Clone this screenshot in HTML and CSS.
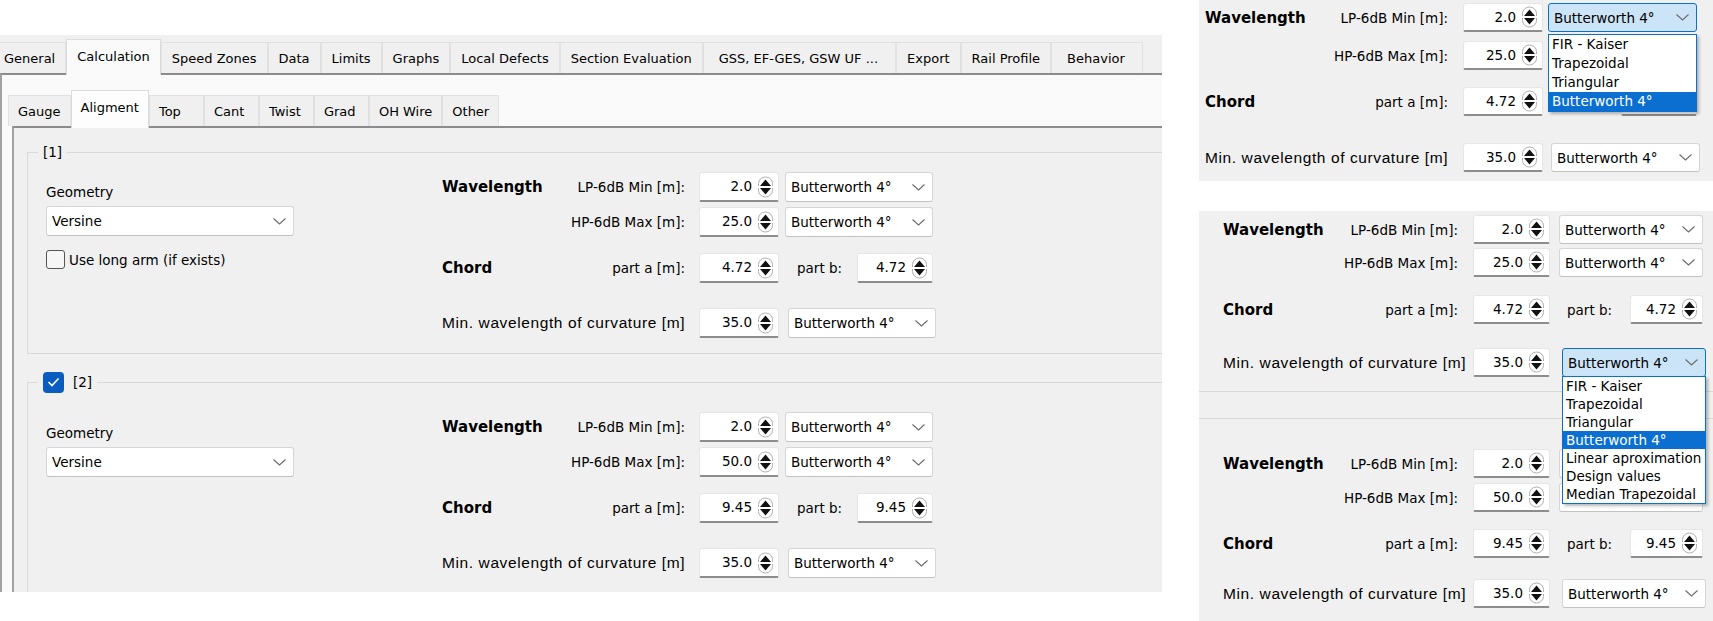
FILE: index.html
```html
<!DOCTYPE html>
<html>
<head>
<meta charset="utf-8">
<title>Calculation – Aligment</title>
<link rel="stylesheet" href="styles.css">
</head>
<body>
<div class="page">

  <section class="shot main">
    <div class="tabbar outer-tabs">
      <div class="tab first">General</div>
      <div class="tab active">Calculation</div>
      <div class="tab">Speed Zones</div>
      <div class="tab">Data</div>
      <div class="tab">Limits</div>
      <div class="tab">Graphs</div>
      <div class="tab">Local Defects</div>
      <div class="tab">Section Evaluation</div>
      <div class="tab wide">GSS, EF-GES, GSW UF ...</div>
      <div class="tab">Export</div>
      <div class="tab">Rail Profile</div>
      <div class="tab wide">Behavior</div>
    </div>
    <div class="outer-pane">
      <div class="tabbar inner-tabs">
        <div class="tab">Gauge</div>
        <div class="tab active">Aligment</div>
        <div class="tab">Top</div>
        <div class="tab">Cant</div>
        <div class="tab">Twist</div>
        <div class="tab">Grad</div>
        <div class="tab">OH Wire</div>
        <div class="tab">Other</div>
      </div>
      <div class="inner-pane">

        <div class="group g1">
          <div class="group-title">[1]</div>
          <div class="geom">
            <div class="geom-label">Geometry</div>
            <div class="combo"><span>Versine</span><svg class="chev" width="13" height="7" viewBox="0 0 13 7"><path d="M0.5 0.5 L6.5 6 L12.5 0.5" fill="none" stroke="#6a6a6a" stroke-width="1.1"/></svg></div>
            <label class="check-row"><span class="cbox"></span><span>Use long arm (if exists)</span></label>
          </div>
          <div class="filters">
            <div class="frow r-lp">
              <span class="ftitle">Wavelength</span>
              <span class="flabel">LP-6dB Min [m]:</span>
              <div class="spin"><span>2.0</span><svg class="arrows" width="17" height="22" viewBox="0 0 17 22"><path d="M1.5 10 V7.5 a7 6.5 0 0 1 14 0 V10" fill="none" stroke="#b0b0b0"/><path d="M1.5 12 V14.5 a7 6.5 0 0 0 14 0 V12" fill="none" stroke="#b0b0b0"/><path d="M3 10 L8.5 3.5 L14 10 Z" fill="#111"/><path d="M3 12 L14 12 L8.5 18.5 Z" fill="#111"/></svg></div>
              <div class="combo"><span>Butterworth 4°</span><svg class="chev" width="13" height="7" viewBox="0 0 13 7"><path d="M0.5 0.5 L6.5 6 L12.5 0.5" fill="none" stroke="#6a6a6a" stroke-width="1.1"/></svg></div>
            </div>
            <div class="frow r-hp">
              <span class="ftitle"></span>
              <span class="flabel">HP-6dB Max [m]:</span>
              <div class="spin"><span>25.0</span><svg class="arrows" width="17" height="22" viewBox="0 0 17 22"><path d="M1.5 10 V7.5 a7 6.5 0 0 1 14 0 V10" fill="none" stroke="#b0b0b0"/><path d="M1.5 12 V14.5 a7 6.5 0 0 0 14 0 V12" fill="none" stroke="#b0b0b0"/><path d="M3 10 L8.5 3.5 L14 10 Z" fill="#111"/><path d="M3 12 L14 12 L8.5 18.5 Z" fill="#111"/></svg></div>
              <div class="combo"><span>Butterworth 4°</span><svg class="chev" width="13" height="7" viewBox="0 0 13 7"><path d="M0.5 0.5 L6.5 6 L12.5 0.5" fill="none" stroke="#6a6a6a" stroke-width="1.1"/></svg></div>
            </div>
            <div class="frow r-chord">
              <span class="ftitle">Chord</span>
              <span class="flabel">part a [m]:</span>
              <div class="spin"><span>4.72</span><svg class="arrows" width="17" height="22" viewBox="0 0 17 22"><path d="M1.5 10 V7.5 a7 6.5 0 0 1 14 0 V10" fill="none" stroke="#b0b0b0"/><path d="M1.5 12 V14.5 a7 6.5 0 0 0 14 0 V12" fill="none" stroke="#b0b0b0"/><path d="M3 10 L8.5 3.5 L14 10 Z" fill="#111"/><path d="M3 12 L14 12 L8.5 18.5 Z" fill="#111"/></svg></div>
              <div class="partb"><span>part b:</span><div class="spin"><span>4.72</span><svg class="arrows" width="17" height="22" viewBox="0 0 17 22"><path d="M1.5 10 V7.5 a7 6.5 0 0 1 14 0 V10" fill="none" stroke="#b0b0b0"/><path d="M1.5 12 V14.5 a7 6.5 0 0 0 14 0 V12" fill="none" stroke="#b0b0b0"/><path d="M3 10 L8.5 3.5 L14 10 Z" fill="#111"/><path d="M3 12 L14 12 L8.5 18.5 Z" fill="#111"/></svg></div></div>
            </div>
            <div class="frow r-min">
              <span class="flabel">Min. wavelength of curvature [m]</span>
              <div class="spin"><span>35.0</span><svg class="arrows" width="17" height="22" viewBox="0 0 17 22"><path d="M1.5 10 V7.5 a7 6.5 0 0 1 14 0 V10" fill="none" stroke="#b0b0b0"/><path d="M1.5 12 V14.5 a7 6.5 0 0 0 14 0 V12" fill="none" stroke="#b0b0b0"/><path d="M3 10 L8.5 3.5 L14 10 Z" fill="#111"/><path d="M3 12 L14 12 L8.5 18.5 Z" fill="#111"/></svg></div>
              <div class="combo"><span>Butterworth 4°</span><svg class="chev" width="13" height="7" viewBox="0 0 13 7"><path d="M0.5 0.5 L6.5 6 L12.5 0.5" fill="none" stroke="#6a6a6a" stroke-width="1.1"/></svg></div>
            </div>
          </div>
        </div>

        <div class="group g2">
          <div class="group-title"><span class="cbox checked"><svg width="13" height="10" viewBox="0 0 13 10"><path d="M1.5 5 L5 8.5 L11.5 1.5" fill="none" stroke="#fff" stroke-width="1.6"/></svg></span><span>[2]</span></div>
          <div class="geom">
            <div class="geom-label">Geometry</div>
            <div class="combo"><span>Versine</span><svg class="chev" width="13" height="7" viewBox="0 0 13 7"><path d="M0.5 0.5 L6.5 6 L12.5 0.5" fill="none" stroke="#6a6a6a" stroke-width="1.1"/></svg></div>
          </div>
          <div class="filters">
            <div class="frow r-lp">
              <span class="ftitle">Wavelength</span>
              <span class="flabel">LP-6dB Min [m]:</span>
              <div class="spin"><span>2.0</span><svg class="arrows" width="17" height="22" viewBox="0 0 17 22"><path d="M1.5 10 V7.5 a7 6.5 0 0 1 14 0 V10" fill="none" stroke="#b0b0b0"/><path d="M1.5 12 V14.5 a7 6.5 0 0 0 14 0 V12" fill="none" stroke="#b0b0b0"/><path d="M3 10 L8.5 3.5 L14 10 Z" fill="#111"/><path d="M3 12 L14 12 L8.5 18.5 Z" fill="#111"/></svg></div>
              <div class="combo"><span>Butterworth 4°</span><svg class="chev" width="13" height="7" viewBox="0 0 13 7"><path d="M0.5 0.5 L6.5 6 L12.5 0.5" fill="none" stroke="#6a6a6a" stroke-width="1.1"/></svg></div>
            </div>
            <div class="frow r-hp">
              <span class="ftitle"></span>
              <span class="flabel">HP-6dB Max [m]:</span>
              <div class="spin"><span>50.0</span><svg class="arrows" width="17" height="22" viewBox="0 0 17 22"><path d="M1.5 10 V7.5 a7 6.5 0 0 1 14 0 V10" fill="none" stroke="#b0b0b0"/><path d="M1.5 12 V14.5 a7 6.5 0 0 0 14 0 V12" fill="none" stroke="#b0b0b0"/><path d="M3 10 L8.5 3.5 L14 10 Z" fill="#111"/><path d="M3 12 L14 12 L8.5 18.5 Z" fill="#111"/></svg></div>
              <div class="combo"><span>Butterworth 4°</span><svg class="chev" width="13" height="7" viewBox="0 0 13 7"><path d="M0.5 0.5 L6.5 6 L12.5 0.5" fill="none" stroke="#6a6a6a" stroke-width="1.1"/></svg></div>
            </div>
            <div class="frow r-chord">
              <span class="ftitle">Chord</span>
              <span class="flabel">part a [m]:</span>
              <div class="spin"><span>9.45</span><svg class="arrows" width="17" height="22" viewBox="0 0 17 22"><path d="M1.5 10 V7.5 a7 6.5 0 0 1 14 0 V10" fill="none" stroke="#b0b0b0"/><path d="M1.5 12 V14.5 a7 6.5 0 0 0 14 0 V12" fill="none" stroke="#b0b0b0"/><path d="M3 10 L8.5 3.5 L14 10 Z" fill="#111"/><path d="M3 12 L14 12 L8.5 18.5 Z" fill="#111"/></svg></div>
              <div class="partb"><span>part b:</span><div class="spin"><span>9.45</span><svg class="arrows" width="17" height="22" viewBox="0 0 17 22"><path d="M1.5 10 V7.5 a7 6.5 0 0 1 14 0 V10" fill="none" stroke="#b0b0b0"/><path d="M1.5 12 V14.5 a7 6.5 0 0 0 14 0 V12" fill="none" stroke="#b0b0b0"/><path d="M3 10 L8.5 3.5 L14 10 Z" fill="#111"/><path d="M3 12 L14 12 L8.5 18.5 Z" fill="#111"/></svg></div></div>
            </div>
            <div class="frow r-min">
              <span class="flabel">Min. wavelength of curvature [m]</span>
              <div class="spin"><span>35.0</span><svg class="arrows" width="17" height="22" viewBox="0 0 17 22"><path d="M1.5 10 V7.5 a7 6.5 0 0 1 14 0 V10" fill="none" stroke="#b0b0b0"/><path d="M1.5 12 V14.5 a7 6.5 0 0 0 14 0 V12" fill="none" stroke="#b0b0b0"/><path d="M3 10 L8.5 3.5 L14 10 Z" fill="#111"/><path d="M3 12 L14 12 L8.5 18.5 Z" fill="#111"/></svg></div>
              <div class="combo"><span>Butterworth 4°</span><svg class="chev" width="13" height="7" viewBox="0 0 13 7"><path d="M0.5 0.5 L6.5 6 L12.5 0.5" fill="none" stroke="#6a6a6a" stroke-width="1.1"/></svg></div>
            </div>
          </div>
        </div>

      </div>
    </div>
  </section>

  <div class="insets">
    <section class="shot inset inset1">
      <div class="filters">
        <div class="frow r-lp">
          <span class="ftitle">Wavelength</span>
          <span class="flabel">LP-6dB Min [m]:</span>
          <div class="spin"><span>2.0</span><svg class="arrows" width="17" height="22" viewBox="0 0 17 22"><path d="M1.5 10 V7.5 a7 6.5 0 0 1 14 0 V10" fill="none" stroke="#b0b0b0"/><path d="M1.5 12 V14.5 a7 6.5 0 0 0 14 0 V12" fill="none" stroke="#b0b0b0"/><path d="M3 10 L8.5 3.5 L14 10 Z" fill="#111"/><path d="M3 12 L14 12 L8.5 18.5 Z" fill="#111"/></svg></div>
          <div class="combo focus"><span>Butterworth 4°</span><svg class="chev" width="13" height="7" viewBox="0 0 13 7"><path d="M0.5 0.5 L6.5 6 L12.5 0.5" fill="none" stroke="#6a6a6a" stroke-width="1.1"/></svg>
            <div class="dropdown">
              <div>FIR - Kaiser</div>
              <div>Trapezoidal</div>
              <div>Triangular</div>
              <div class="sel">Butterworth 4°</div>
            </div>
          </div>
        </div>
        <div class="frow r-hp">
          <span class="ftitle"></span>
          <span class="flabel">HP-6dB Max [m]:</span>
          <div class="spin"><span>25.0</span><svg class="arrows" width="17" height="22" viewBox="0 0 17 22"><path d="M1.5 10 V7.5 a7 6.5 0 0 1 14 0 V10" fill="none" stroke="#b0b0b0"/><path d="M1.5 12 V14.5 a7 6.5 0 0 0 14 0 V12" fill="none" stroke="#b0b0b0"/><path d="M3 10 L8.5 3.5 L14 10 Z" fill="#111"/><path d="M3 12 L14 12 L8.5 18.5 Z" fill="#111"/></svg></div>
          <div class="combo covered"></div>
        </div>
        <div class="frow r-chord">
          <span class="ftitle">Chord</span>
          <span class="flabel">part a [m]:</span>
          <div class="spin"><span>4.72</span><svg class="arrows" width="17" height="22" viewBox="0 0 17 22"><path d="M1.5 10 V7.5 a7 6.5 0 0 1 14 0 V10" fill="none" stroke="#b0b0b0"/><path d="M1.5 12 V14.5 a7 6.5 0 0 0 14 0 V12" fill="none" stroke="#b0b0b0"/><path d="M3 10 L8.5 3.5 L14 10 Z" fill="#111"/><path d="M3 12 L14 12 L8.5 18.5 Z" fill="#111"/></svg></div>
          <div class="partb"><span></span><div class="spin"></div></div>
        </div>
        <div class="frow r-min">
          <span class="flabel">Min. wavelength of curvature [m]</span>
          <div class="spin"><span>35.0</span><svg class="arrows" width="17" height="22" viewBox="0 0 17 22"><path d="M1.5 10 V7.5 a7 6.5 0 0 1 14 0 V10" fill="none" stroke="#b0b0b0"/><path d="M1.5 12 V14.5 a7 6.5 0 0 0 14 0 V12" fill="none" stroke="#b0b0b0"/><path d="M3 10 L8.5 3.5 L14 10 Z" fill="#111"/><path d="M3 12 L14 12 L8.5 18.5 Z" fill="#111"/></svg></div>
          <div class="combo"><span>Butterworth 4°</span><svg class="chev" width="13" height="7" viewBox="0 0 13 7"><path d="M0.5 0.5 L6.5 6 L12.5 0.5" fill="none" stroke="#6a6a6a" stroke-width="1.1"/></svg></div>
        </div>
      </div>
    </section>

    <section class="shot inset inset2">
      <div class="filters">
        <div class="frow r-lp">
          <span class="ftitle">Wavelength</span>
          <span class="flabel">LP-6dB Min [m]:</span>
          <div class="spin"><span>2.0</span><svg class="arrows" width="17" height="22" viewBox="0 0 17 22"><path d="M1.5 10 V7.5 a7 6.5 0 0 1 14 0 V10" fill="none" stroke="#b0b0b0"/><path d="M1.5 12 V14.5 a7 6.5 0 0 0 14 0 V12" fill="none" stroke="#b0b0b0"/><path d="M3 10 L8.5 3.5 L14 10 Z" fill="#111"/><path d="M3 12 L14 12 L8.5 18.5 Z" fill="#111"/></svg></div>
          <div class="combo"><span>Butterworth 4°</span><svg class="chev" width="13" height="7" viewBox="0 0 13 7"><path d="M0.5 0.5 L6.5 6 L12.5 0.5" fill="none" stroke="#6a6a6a" stroke-width="1.1"/></svg></div>
        </div>
        <div class="frow r-hp">
          <span class="ftitle"></span>
          <span class="flabel">HP-6dB Max [m]:</span>
          <div class="spin"><span>25.0</span><svg class="arrows" width="17" height="22" viewBox="0 0 17 22"><path d="M1.5 10 V7.5 a7 6.5 0 0 1 14 0 V10" fill="none" stroke="#b0b0b0"/><path d="M1.5 12 V14.5 a7 6.5 0 0 0 14 0 V12" fill="none" stroke="#b0b0b0"/><path d="M3 10 L8.5 3.5 L14 10 Z" fill="#111"/><path d="M3 12 L14 12 L8.5 18.5 Z" fill="#111"/></svg></div>
          <div class="combo"><span>Butterworth 4°</span><svg class="chev" width="13" height="7" viewBox="0 0 13 7"><path d="M0.5 0.5 L6.5 6 L12.5 0.5" fill="none" stroke="#6a6a6a" stroke-width="1.1"/></svg></div>
        </div>
        <div class="frow r-chord">
          <span class="ftitle">Chord</span>
          <span class="flabel">part a [m]:</span>
          <div class="spin"><span>4.72</span><svg class="arrows" width="17" height="22" viewBox="0 0 17 22"><path d="M1.5 10 V7.5 a7 6.5 0 0 1 14 0 V10" fill="none" stroke="#b0b0b0"/><path d="M1.5 12 V14.5 a7 6.5 0 0 0 14 0 V12" fill="none" stroke="#b0b0b0"/><path d="M3 10 L8.5 3.5 L14 10 Z" fill="#111"/><path d="M3 12 L14 12 L8.5 18.5 Z" fill="#111"/></svg></div>
          <div class="partb"><span>part b:</span><div class="spin"><span>4.72</span><svg class="arrows" width="17" height="22" viewBox="0 0 17 22"><path d="M1.5 10 V7.5 a7 6.5 0 0 1 14 0 V10" fill="none" stroke="#b0b0b0"/><path d="M1.5 12 V14.5 a7 6.5 0 0 0 14 0 V12" fill="none" stroke="#b0b0b0"/><path d="M3 10 L8.5 3.5 L14 10 Z" fill="#111"/><path d="M3 12 L14 12 L8.5 18.5 Z" fill="#111"/></svg></div></div>
        </div>
        <div class="frow r-min">
          <span class="flabel">Min. wavelength of curvature [m]</span>
          <div class="spin"><span>35.0</span><svg class="arrows" width="17" height="22" viewBox="0 0 17 22"><path d="M1.5 10 V7.5 a7 6.5 0 0 1 14 0 V10" fill="none" stroke="#b0b0b0"/><path d="M1.5 12 V14.5 a7 6.5 0 0 0 14 0 V12" fill="none" stroke="#b0b0b0"/><path d="M3 10 L8.5 3.5 L14 10 Z" fill="#111"/><path d="M3 12 L14 12 L8.5 18.5 Z" fill="#111"/></svg></div>
          <div class="combo focus"><span>Butterworth 4°</span><svg class="chev" width="13" height="7" viewBox="0 0 13 7"><path d="M0.5 0.5 L6.5 6 L12.5 0.5" fill="none" stroke="#6a6a6a" stroke-width="1.1"/></svg>
            <div class="dropdown">
              <div>FIR - Kaiser</div>
              <div>Trapezoidal</div>
              <div>Triangular</div>
              <div class="sel">Butterworth 4°</div>
              <div>Linear aproximation</div>
              <div>Design values</div>
              <div>Median Trapezoidal</div>
            </div>
          </div>
        </div>
      </div>
      <div class="sep sep1"></div>
      <div class="sep sep2"></div>
      <div class="filters lower">
        <div class="frow r-lp">
          <span class="ftitle">Wavelength</span>
          <span class="flabel">LP-6dB Min [m]:</span>
          <div class="spin"><span>2.0</span><svg class="arrows" width="17" height="22" viewBox="0 0 17 22"><path d="M1.5 10 V7.5 a7 6.5 0 0 1 14 0 V10" fill="none" stroke="#b0b0b0"/><path d="M1.5 12 V14.5 a7 6.5 0 0 0 14 0 V12" fill="none" stroke="#b0b0b0"/><path d="M3 10 L8.5 3.5 L14 10 Z" fill="#111"/><path d="M3 12 L14 12 L8.5 18.5 Z" fill="#111"/></svg></div>
          <div class="combo covered"></div>
        </div>
        <div class="frow r-hp">
          <span class="ftitle"></span>
          <span class="flabel">HP-6dB Max [m]:</span>
          <div class="spin"><span>50.0</span><svg class="arrows" width="17" height="22" viewBox="0 0 17 22"><path d="M1.5 10 V7.5 a7 6.5 0 0 1 14 0 V10" fill="none" stroke="#b0b0b0"/><path d="M1.5 12 V14.5 a7 6.5 0 0 0 14 0 V12" fill="none" stroke="#b0b0b0"/><path d="M3 10 L8.5 3.5 L14 10 Z" fill="#111"/><path d="M3 12 L14 12 L8.5 18.5 Z" fill="#111"/></svg></div>
          <div class="combo covered"></div>
        </div>
        <div class="frow r-chord">
          <span class="ftitle">Chord</span>
          <span class="flabel">part a [m]:</span>
          <div class="spin"><span>9.45</span><svg class="arrows" width="17" height="22" viewBox="0 0 17 22"><path d="M1.5 10 V7.5 a7 6.5 0 0 1 14 0 V10" fill="none" stroke="#b0b0b0"/><path d="M1.5 12 V14.5 a7 6.5 0 0 0 14 0 V12" fill="none" stroke="#b0b0b0"/><path d="M3 10 L8.5 3.5 L14 10 Z" fill="#111"/><path d="M3 12 L14 12 L8.5 18.5 Z" fill="#111"/></svg></div>
          <div class="partb"><span>part b:</span><div class="spin"><span>9.45</span><svg class="arrows" width="17" height="22" viewBox="0 0 17 22"><path d="M1.5 10 V7.5 a7 6.5 0 0 1 14 0 V10" fill="none" stroke="#b0b0b0"/><path d="M1.5 12 V14.5 a7 6.5 0 0 0 14 0 V12" fill="none" stroke="#b0b0b0"/><path d="M3 10 L8.5 3.5 L14 10 Z" fill="#111"/><path d="M3 12 L14 12 L8.5 18.5 Z" fill="#111"/></svg></div></div>
        </div>
        <div class="frow r-min">
          <span class="flabel">Min. wavelength of curvature [m]</span>
          <div class="spin"><span>35.0</span><svg class="arrows" width="17" height="22" viewBox="0 0 17 22"><path d="M1.5 10 V7.5 a7 6.5 0 0 1 14 0 V10" fill="none" stroke="#b0b0b0"/><path d="M1.5 12 V14.5 a7 6.5 0 0 0 14 0 V12" fill="none" stroke="#b0b0b0"/><path d="M3 10 L8.5 3.5 L14 10 Z" fill="#111"/><path d="M3 12 L14 12 L8.5 18.5 Z" fill="#111"/></svg></div>
          <div class="combo"><span>Butterworth 4°</span><svg class="chev" width="13" height="7" viewBox="0 0 13 7"><path d="M0.5 0.5 L6.5 6 L12.5 0.5" fill="none" stroke="#6a6a6a" stroke-width="1.1"/></svg></div>
        </div>
      </div>
    </section>
  </div>

</div>
</body>
</html>
```

FILE: styles.css
```css
* { box-sizing: border-box; }

html, body {
  margin: 0;
  padding: 0;
  background: #ffffff;
}

body {
  font-family: "DejaVu Sans", "Liberation Sans", sans-serif;
  font-size: 13.5px;
  color: #000;
}

.page {
  display: grid;
  grid-template-columns: 1162px 514px;
  column-gap: 37px;
  width: 1713px;
  height: 621px;
  overflow: hidden;
  align-items: start;
}

/* ---------- main screenshot ---------- */
.main {
  margin-top: 35px;
  height: 557px;
  display: flex;
  flex-direction: column;
  background: #f0f0f0;
  overflow: hidden;
}

.tabbar {
  display: flex;
  align-items: flex-end;
  position: relative;
  z-index: 1;
  flex: none;
}

.tab {
  white-space: nowrap;
  background: #f0f0f0;
  border: 1px solid #e1e1e1;
  border-bottom: none;
  padding: 0 10px;
  display: flex;
  align-items: center;
}

.outer-tabs {
  height: 38px;
  font-size: 13px;
}
.outer-tabs .tab { height: 31px; }
.outer-tabs .tab.first { padding-left: 4px; border-left: none; }
.outer-tabs .tab.wide { padding: 0 17px 0 15px; }
.outer-tabs .tab.active {
  height: 36px;
  margin-bottom: -2px;
  background: #fafafa;
  border-color: #dcdcdc;
  padding-bottom: 3px;
}

.outer-pane {
  flex: 1;
  min-height: 0;
  display: flex;
  flex-direction: column;
  background: #fafafa;
  border-top: 2px solid #8c8c8c;
  border-left: 2px solid #a2a2a2;
  padding-left: 6px;
}

.inner-tabs {
  height: 51px;
  font-size: 13px;
}
.inner-tabs .tab {
  height: 31px;
  padding: 0 9px;
  min-width: 55px;
}
.inner-tabs .tab.active {
  height: 38px;
  margin-bottom: -2px;
  background: #fdfdfd;
  border-color: #dcdcdc;
  padding-bottom: 5px;
}

.inner-pane {
  flex: 1;
  margin-left: 4px;
  background: #f0f0f0;
  border-top: 2px solid #8c8c8c;
  border-left: 2px solid #a2a2a2;
  padding: 24px 0 0 13px;
}

/* ---------- group boxes ---------- */
.group {
  position: relative;
  display: flex;
  align-items: flex-start;
  border: 1px solid #d9d9d9;
  margin-right: -60px;
}
.g1 { padding: 19px 0 15px 18px; }
.g2 { margin-top: 28px; padding: 29px 0 20px 18px; }

.group-title {
  position: absolute;
  top: -11px;
  left: 10px;
  height: 20px;
  padding: 0 5px;
  background: #f0f0f0;
  display: flex;
  align-items: center;
  gap: 9px;
}
.g2 .group-title { top: -12px; height: 22px; }

.geom {
  width: 248px;
  flex: none;
  margin-top: 11px;
}
.g2 .geom { margin-top: 12px; }
.geom-label { height: 19px; line-height: 19px; }
.geom .combo {
  width: 248px;
  height: 30px;
  margin-left: 0;
  margin-top: 4px;
}

.check-row {
  display: flex;
  align-items: center;
  gap: 4px;
  height: 19px;
  margin-top: 14px;
}

.cbox {
  width: 19px;
  height: 19px;
  flex: none;
  border: 1px solid #555;
  border-radius: 3px;
  background: #f6f6f6;
}
.cbox.checked {
  width: 21px;
  height: 21px;
  border: none;
  border-radius: 4px;
  background: #0b5cc0;
  display: flex;
  align-items: center;
  justify-content: center;
}

/* ---------- filter block ---------- */
.filters {
  --c1: 118px;
  --c2: 125px;
  --g1: 14px;
  --sw: 80px;
  --g2: 6px;
  --cw: 148px;
  --rh: 30px;
  --m1: 5px;
  --m2: 16px;
  --m3: 25px;
  --pbpad: 12px;
  --pbw: 76px;
  flex: none;
}
.group .filters { margin-left: 148px; }

.frow {
  display: flex;
  align-items: center;
  height: var(--rh);
}
.r-hp { margin-top: var(--m1); }
.r-chord { margin-top: var(--m2); }
.r-min { margin-top: var(--m3); }

.ftitle {
  width: var(--c1);
  flex: none;
  font-weight: bold;
  font-size: 15px;
  white-space: nowrap;
}

.flabel {
  width: var(--c2);
  flex: none;
  text-align: right;
  white-space: nowrap;
}
.r-min .flabel {
  width: calc(var(--c1) + var(--c2) - 2px);
  font-family: "Liberation Sans", Arial, sans-serif;
  font-size: 15.5px;
  letter-spacing: 0.6px;
  margin-right: 2px;
}

.spin {
  width: var(--sw);
  margin-left: var(--g1);
  height: 100%;
  flex: none;
  background: #fff;
  border: 1px solid #e6e6e6;
  border-bottom: 2px solid #8d8d8d;
  border-radius: 3px 3px 2px 2px;
  display: flex;
  align-items: center;
  justify-content: flex-end;
  gap: 5px;
  padding-right: 4px;
}
.spin span { padding-bottom: 1px; }
.arrows { flex: none; }

.combo {
  position: relative;
  width: var(--cw);
  margin-left: var(--g2);
  height: 100%;
  flex: none;
  background: #fff;
  border: 1px solid #d6d6d6;
  border-bottom-color: #c2c2c2;
  border-radius: 3px;
  display: flex;
  align-items: center;
  justify-content: space-between;
  padding: 0 7px 0 5px;
  white-space: nowrap;
}
.r-min .combo { margin-left: calc(var(--g2) + 3px); }
.combo.focus {
  background: #cce4f7;
  border: 1px solid #0a6fd0;
}
.chev { flex: none; }

.partb {
  width: var(--cw);
  margin-left: var(--g2);
  height: 100%;
  flex: none;
  display: flex;
  align-items: center;
  justify-content: space-between;
  padding-left: var(--pbpad);
}
.partb .spin {
  width: var(--pbw);
  margin-left: 0;
}

.dropdown {
  position: absolute;
  left: -1px;
  right: -1px;
  top: calc(100% + 3px);
  z-index: 5;
  background: #fff;
  border: 1px solid #0a6fd0;
  box-shadow: 2px 2px 3px rgba(0, 0, 0, 0.28);
}
.dropdown div {
  height: 19px;
  line-height: 19px;
  padding-left: 3px;
  white-space: nowrap;
}
.dropdown .sel {
  background: #0a6fd0;
  color: #fff;
}

/* ---------- insets ---------- */
.insets {
  display: flex;
  flex-direction: column;
  gap: 30px;
}
.inset {
  background: #f0f0f0;
  overflow: hidden;
}
.inset1 {
  height: 181px;
  padding: 3px 0 0 6px;
}
.inset1 .filters {
  --g1: 15px;
  --g2: 5px;
  --cw: 149px;
  --rh: 29px;
  --m1: 9px;
  --m2: 17px;
  --m3: 27px;
}
.inset1 .dropdown { top: calc(100% + 3px); }

.inset2 {
  height: 410px;
  padding: 4px 0 0 24px;
}
.inset2 .filters {
  --c1: 110px;
  --g1: 15px;
  --sw: 77px;
  --g2: 9px;
  --cw: 144px;
  --rh: 29px;
  --m1: 4px;
  --m2: 18px;
  --m3: 24px;
  --pbpad: 8px;
  --pbw: 73px;
}
.inset2 .filters.lower {
  --m1: 5px;
  --m2: 17px;
  --m3: 21px;
  margin-top: 30px;
}
.inset2 .dropdown { top: 100%; }
.inset2 .dropdown div { height: 18px; line-height: 18px; }

.sep {
  border-top: 1px solid #d9d9d9;
  margin-left: -24px;
}
.sep1 { margin-top: 14px; }
.sep2 { margin-top: 26px; }
```
